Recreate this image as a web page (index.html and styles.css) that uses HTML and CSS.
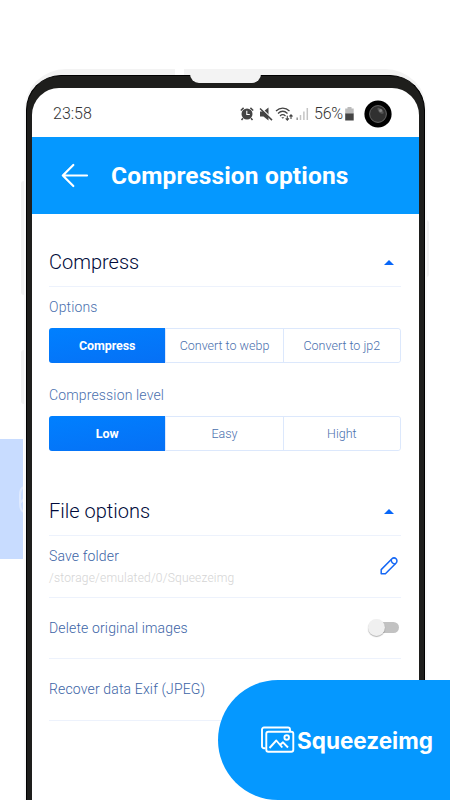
FILE: index.html
```html
<!DOCTYPE html>
<html lang="en">
<head>
  <meta charset="UTF-8">
  <title>Squeezeimg - Compression options</title>
  <link rel="stylesheet" href="styles.css">
</head>
<body>

  <div class="side-tile">
    <svg width="23" height="120" viewBox="0 0 23 120" fill="none" stroke="#dfeaff" stroke-width="2">
      <path d="M24 48c-3 1-4 4-4 8v8c0 5 1 8 4 9M24 60l-4 4"/>
    </svg>
  </div>
  <div class="side-key key-left-top"></div>
  <div class="side-key key-left-bottom"></div>
  <div class="side-key key-right"></div>

  <div class="shell"></div>
  <div class="shell-gap"></div>
  <div class="phone">
    <div class="screen">

      <div class="status">
        <span class="time">23:58</span>
        <svg class="status-icons" width="72" height="16" viewBox="0 0 72 16">
          <!-- alarm -->
          <circle cx="8" cy="8" r="5.5" fill="#444"/>
          <path d="M1.8 4.5l2.8-2.6M14.2 4.5l-2.8-2.6M4 12.2L2.5 14M12 12.2l1.5 1.8" stroke="#444" stroke-width="1.5"/>
          <path d="M7.8 4.8v3.7h3" stroke="#fff" stroke-width="1.1" fill="none"/>
          <!-- muted speaker -->
          <path d="M21 5.5h3.5l5-4v13l-5-4H21z" fill="#444"/>
          <path d="M21.800 1.800l12 11.600" stroke="#fff" stroke-width="1.3"/>
          <path d="M21 2.500l12 11.600" stroke="#444" stroke-width="1.5"/>
          <!-- wifi -->
          <g fill="none" stroke="#444" stroke-width="1.3">
            <path d="M37 5c4-3.8 9.5-3.8 13.500 0M39 7.500c3-2.800 6.500-2.800 9.500 0M41 9.900c1.800-1.600 3.700-1.600 5.500 0"/>
          </g>
          <path d="M42.300 11.200h3l-1.500 1.600z" fill="#444"/>
          <path d="M48.300 9.800v4M46.700 12.400l1.600 1.700 1.600-1.700M52 13V8.800M50.500 10.500L52 8.900l1.500 1.600" fill="none" stroke="#444" stroke-width="1.1"/>
          <!-- signal -->
          <path d="M58.2 11.5V14" stroke="#999" stroke-width="1.6"/>
          <path d="M61.5 9V14M64.9 5.5V14M68.3 2V14" stroke="#c4c4c4" stroke-width="1.5"/>
        </svg>
        <span class="percent">56%</span>
        <svg class="battery" width="9" height="14" viewBox="0 0 9 14">
          <path d="M2.500 0h4v1.600H8.700V7H0.200V1.600h2.300z" fill="#bbb"/>
          <path d="M0.200 6.600h8.500V13.500H0.200z" fill="#444"/>
        </svg>
        <svg class="camera" width="28" height="28" viewBox="0 0 28 28">
          <circle cx="14" cy="14" r="13.6" fill="#000"/>
          <circle cx="14" cy="14" r="8.4" fill="#303030" stroke="#656565"/>
          <path d="M13.5 7.8c3.4 0 6 2.3 6.2 5.5-1.5 1-3.3.5-4.5-1s-1.9-3-1.7-4.5z" fill="#555"/>
          <circle cx="16.6" cy="10.5" r="1.5" fill="#858585"/>
        </svg>
      </div>

      <header class="header">
        <svg width="28" height="26" viewBox="0 0 28 26" fill="none" stroke="#fff" stroke-width="2.2" stroke-linecap="round" stroke-linejoin="round">
          <path d="M26 12.5H1.800M12.300 2L1.800 12.500 12.300 23"/>
        </svg>
        <h1>Compression options</h1>
      </header>

      <main class="content">
        <section>
          <div class="section-head">
            <h2>Compress</h2>
            <span class="caret"></span>
          </div>
          <p class="label label-options">Options</p>
          <div class="segmented">
            <button class="active">Compress</button>
            <button>Convert to webp</button>
            <button>Convert to jp2</button>
          </div>
          <p class="label label-level">Compression level</p>
          <div class="segmented">
            <button class="active">Low</button>
            <button>Easy</button>
            <button>Hight</button>
          </div>
        </section>

        <section class="files">
          <div class="section-head">
            <h2>File options</h2>
            <span class="caret"></span>
          </div>
          <div class="row">
            <div class="folder">
              <span>Save folder</span>
              <small>/storage/emulated/0/Squeezeimg</small>
            </div>
            <svg class="pencil" width="18" height="18" viewBox="0 0 18 18" fill="none" stroke="#1467f5" stroke-width="1.5" stroke-linejoin="round">
              <path d="M1.200 16.800V12.600L11.700 2c1.400-1.400 3.300-1.300 4.400-.2s1.200 3-.2 4.400L5.400 16.800z"/>
              <path d="M11.200 2.800c0 2.500 1.600 4.200 4.100 4.100"/>
            </svg>
          </div>
          <div class="row">
            <span>Delete original images</span>
            <span class="toggle"></span>
          </div>
          <div class="row">
            <span>Recover data Exif (JPEG)</span>
          </div>
        </section>
      </main>
    </div>
  </div>
  <div class="notch"></div>

  <div class="brand">
    <svg width="34" height="28" viewBox="0 0 34 28" fill="none" stroke="#fff" stroke-width="1.9" stroke-linejoin="round">
      <path d="M4.500 22.200H3a2 2 0 0 1-2-2V3.500a2 2 0 0 1 2-2h24a2 2 0 0 1 2 2v1.500"/>
      <rect x="5.300" y="5.700" width="27" height="20" rx="2"/>
      <path d="M8.500 22l6.800-7.500 6 7M19.500 18.500l2.500-2.200 5 5.200"/>
      <circle cx="25.700" cy="11.500" r="2.300"/>
    </svg>
    <span>Squeezeimg</span>
  </div>

</body>
</html>
```

FILE: styles.css
```css
* {
  box-sizing: border-box;
}
body {
  margin: 0;
  width: 450px;
  height: 800px;
  overflow: hidden;
  position: relative;
  background: #fff;
  font-family: Roboto, sans-serif;
  padding: 75px 25px 0 26px;
}
h1, h2, p {
  margin: 0;
}

/* phone frame */
.side-tile {
  position: absolute;
  left: 0;
  top: 439px;
  width: 23px;
  height: 120px;
  background: #c8dcff;
}
.side-key {
  position: absolute;
  width: 5px;
  background: #f3f3f3;
}
.key-left-top {
  left: 21px;
  top: 181px;
  height: 114px;
  border-radius: 3px 0 0 3px;
}
.key-left-bottom {
  left: 21px;
  top: 350px;
  height: 54px;
  border-radius: 3px 0 0 3px;
}
.key-right {
  left: 424px;
  top: 220px;
  height: 57px;
  border-radius: 0 3px 3px 0;
}
.shell {
  position: absolute;
  left: 24px;
  top: 69px;
  width: 403px;
  height: 731px;
  border: 1px solid #fafafa;
  border-top: 6px solid #f3f3f3;
  border-bottom: 0;
  border-radius: 42px 42px 0 0;
  background: #f7f7f7;
}
.shell-gap {
  position: absolute;
  left: 175px;
  top: 69px;
  width: 9px;
  height: 6px;
  background: #fff;
}
.phone {
  position: relative;
  height: 725px;
  padding: 12px 5px 0;
  border: 1px solid #000;
  border-bottom: 0;
  border-radius: 35px 35px 0 0;
  background: #1e1e1c;
}
.screen {
  height: 712px;
  border-radius: 27px 27px 0 0;
  background: #fff;
  overflow: hidden;
}
.notch {
  position: absolute;
  left: 190px;
  top: 70px;
  width: 71px;
  height: 13px;
  border-radius: 0 0 9px 9px;
  background: #f3f3f3;
}

/* status bar */
.status {
  display: flex;
  align-items: center;
  height: 49px;
  padding: 2px 27px 0 21px;
  color: #333;
}
.time {
  font-size: 16px;
  font-weight: 350;
}
.status-icons {
  margin-left: auto;
  margin-right: 3px;
}
.percent {
  font-size: 16px;
  font-weight: 350;
  width: 30px;
  letter-spacing: -0.2px;
}
.battery {
  margin-left: 1px;
  margin-right: 10px;
}

.header {
  display: flex;
  align-items: center;
  height: 77px;
  padding-left: 29px;
  background: #0598ff;
}
.header h1 {
  margin-left: 22px;
  color: #fff;
  font-size: 24.5px;
  font-weight: 700;
  letter-spacing: 0.15px;
  white-space: nowrap;
}

/* options */
.content {
  padding: 24px 18px 0 17px;
}
.section-head {
  display: flex;
  align-items: center;
  justify-content: space-between;
  height: 49px;
  border-bottom: 1px solid #edf2fc;
}
.section-head h2 {
  font-size: 20px;
  font-weight: 350;
  color: #000a3a;
}
.caret {
  margin-right: 7px;
  border: 5px solid transparent;
  border-top: 0;
  border-bottom: 5px solid #0867f8;
}
.label {
  font-size: 14px;
  font-weight: 350;
  letter-spacing: 0.15px;
  line-height: 20px;
  color: #4a70ae;
}
.label-options {
  margin: 10px 0 11px;
}
.label-level {
  margin: 22px 0 11px;
}
.segmented {
  display: flex;
  height: 35px;
  border: 1px solid #dce8fc;
  border-radius: 3px;
}
.segmented button {
  flex: 1 1 0;
  padding: 0;
  border: 0;
  border-left: 1px solid #dce8fc;
  border-radius: 0 3px 3px 0;
  background: #fff;
  color: #4a70ae;
  font-family: inherit;
  font-size: 12.5px;
  font-weight: 350;
}
.segmented .active {
  margin: -1px 0 -1px -1px;
  border: 0;
  border-radius: 3px 0 0 3px;
  background: linear-gradient(170deg, #0080ff, #0670f5);
  color: #fff;
  font-weight: 700;
  letter-spacing: -0.1px;
}
.files {
  margin-top: 36px;
}
.row {
  display: flex;
  align-items: center;
  justify-content: space-between;
  height: 61.5px;
  border-bottom: 1px solid #edf2fc;
  color: #3c64a6;
  font-size: 14px;
  font-weight: 350;
  letter-spacing: 0.15px;
}
.folder {
  display: flex;
  flex-direction: column;
  gap: 7px;
}
.folder small {
  font-size: 12px;
  letter-spacing: 0.2px;
  color: #d4d4d4;
}
.pencil {
  margin-right: 3px;
}
.toggle {
  position: relative;
  width: 28px;
  height: 11px;
  margin-right: 2px;
  border-radius: 6px;
  background: #c2c2c2;
}
.toggle::before {
  content: "";
  position: absolute;
  left: -3px;
  top: -3px;
  width: 17px;
  height: 17px;
  border-radius: 50%;
  background: #f0f0f0;
  box-shadow: 0 1px 1px rgba(0,0,0,0.3);
}

.brand {
  position: absolute;
  left: 218px;
  top: 680px;
  width: 232px;
  height: 120px;
  padding-left: 43px;
  display: flex;
  align-items: center;
  border-radius: 60px 0 0 60px;
  background: #0598ff;
  color: #fff;
  font-family: Inter, sans-serif;
  font-size: 22.5px;
  font-weight: 700;
}
.brand span {
  margin-left: 2px;
}
```
